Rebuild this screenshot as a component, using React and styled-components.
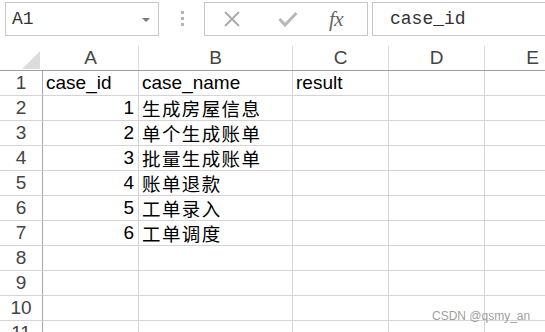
import React from "react";
import styled, { createGlobalStyle } from "styled-components";

const Global = createGlobalStyle`
  html, body { margin: 0; padding: 0; background: #fff; overflow: hidden; }
  body { width: 545px; height: 332px; font-family: "Liberation Sans", "Noto Sans CJK SC", sans-serif; }
`;

const Page = styled.div`
  position: relative;
  width: 545px;
  height: 332px;
  overflow: hidden;
`;

const Toolbar = styled.div`
  display: flex;
  align-items: flex-start;
  height: 40px;
  padding: 2px 0 0 5px;
  box-sizing: border-box;
`;

const NameBox = styled.div`
  box-sizing: border-box;
  width: 154px;
  height: 34px;
  border: 1px solid #c8c8c8;
  display: flex;
  align-items: center;
  justify-content: space-between;
  padding: 0 8px 0 6px;
  font-family: "Liberation Mono", monospace;
  font-size: 18px;
  color: #333;
`;

const Caret = styled.span`
  width: 0;
  height: 0;
  border-left: 4px solid transparent;
  border-right: 4px solid transparent;
  border-top: 4px solid #7a7a7a;
  margin-top: 1px;
`;

const Dots = styled.div`
  display: flex;
  flex-direction: column;
  gap: 3px;
  margin: 9px 0 0 22px;
`;

const Dot = styled.span`
  width: 3px;
  height: 3px;
  background: #b5b5b5;
`;

const FxGroup = styled.div`
  box-sizing: border-box;
  width: 164px;
  height: 34px;
  margin-left: 20px;
  border: 1px solid #c8c8c8;
  display: flex;
  align-items: center;
  padding-left: 18px;
`;

const IconSlot = styled.div`
  width: ${(p) => p.w}px;
  display: flex;
  align-items: center;
  justify-content: flex-start;
`;

const Fx = styled.span`
  font-family: "Liberation Serif", serif;
  font-style: italic;
  font-size: 21px;
  color: #666;
  line-height: 1;
  letter-spacing: -0.5px;
`;

const FormulaInput = styled.div`
  box-sizing: border-box;
  flex: 1;
  height: 34px;
  margin-left: 4px;
  margin-right: -4px;
  border: 1px solid #c8c8c8;
  display: flex;
  align-items: center;
  padding-left: 17px;
  font-family: "Liberation Mono", monospace;
  font-size: 18px;
  color: #333;
`;

const Sheet = styled.div`
  display: flex;
  flex-direction: column;
`;

const HeaderRow = styled.div`
  display: flex;
  align-items: flex-end;
  height: 31px;
  box-sizing: border-box;
  border-bottom: 1px solid #9e9e9e;
`;

const ColHead = styled.div`
  flex: none;
  box-sizing: border-box;
  width: ${(p) => p.w}px;
  height: 24px;
  border-right: 1px solid ${(p) => (p.corner ? "transparent" : "#dcdcdc")};
  display: flex;
  align-items: center;
  justify-content: center;
  font-size: 19px;
  color: #444;
`;

const CornerCell = styled(ColHead)`
  align-items: flex-end;
  justify-content: flex-end;
  padding: 0 2px 1px 0;
`;

const Triangle = styled.div`
  width: 18px;
  height: 18px;
  background: #dcdcdc;
  clip-path: polygon(100% 0, 100% 100%, 0 100%);
`;

const Row = styled.div`
  display: flex;
  height: 25px;
`;

const Cell = styled.div`
  flex: none;
  box-sizing: border-box;
  width: ${(p) => p.w}px;
  height: 25px;
  border-right: 1px solid #d4d4d4;
  border-bottom: 1px solid #d4d4d4;
  display: flex;
  align-items: center;
  justify-content: ${(p) => (p.num ? "flex-end" : "flex-start")};
  padding: 0 4px 0 3px;
  font-size: ${(p) => (p.cjk ? 18.5 : 19)}px;
  letter-spacing: ${(p) => (p.cjk ? "1.4px" : "0")};
  color: #000;
  white-space: nowrap;
  overflow: visible;
`;

const RowHead = styled(Cell)`
  justify-content: center;
  padding: 0;
  border-right-color: #a9a9a9;
  color: #444;
`;

const Watermark = styled.div`
  position: absolute;
  left: 432px;
  top: 309px;
  font-family: "Liberation Sans", sans-serif;
  font-size: 12px;
  color: rgba(140, 140, 140, 0.85);
  white-space: nowrap;
`;

const widths = [43, 96, 154, 96, 96, 96];
const letters = ["A", "B", "C", "D", "E"];

const data = [
  ["case_id", "case_name", "result"],
  [1, "生成房屋信息"],
  [2, "单个生成账单"],
  [3, "批量生成账单"],
  [4, "账单退款"],
  [5, "工单录入"],
  [6, "工单调度"],
];

const CrossIcon = () => (
  <svg width="18" height="16" viewBox="0 0 18 16">
    <path d="M2 1 L16 15 M16 1 L2 15" stroke="#a8a8a8" strokeWidth="1.8" fill="none" />
  </svg>
);

const CheckIcon = () => (
  <svg width="20" height="16" viewBox="0 0 20 16">
    <path d="M1.5 8 L7 14 L18.5 2" stroke="#b8b8b8" strokeWidth="3" fill="none" strokeLinejoin="miter" />
  </svg>
);

export default function App() {
  return (
    <Page>
      <Global />
      <Toolbar>
        <NameBox>
          <span>A1</span>
          <Caret />
        </NameBox>
        <Dots>
          <Dot />
          <Dot />
          <Dot />
        </Dots>
        <FxGroup>
          <IconSlot w={55}>
            <CrossIcon />
          </IconSlot>
          <IconSlot w={51}>
            <CheckIcon />
          </IconSlot>
          <IconSlot w={30}>
            <Fx>fx</Fx>
          </IconSlot>
        </FxGroup>
        <FormulaInput>case_id</FormulaInput>
      </Toolbar>
      <Sheet>
        <HeaderRow>
          <CornerCell w={widths[0]} corner>
            <Triangle />
          </CornerCell>
          {letters.map((l, i) => (
            <ColHead key={l} w={widths[i + 1]}>
              {l}
            </ColHead>
          ))}
        </HeaderRow>
        {Array.from({ length: 11 }, (_, r) => {
          const rowData = data[r] || [];
          return (
            <Row key={r}>
              <RowHead w={widths[0]}>{r + 1}</RowHead>
              {letters.map((l, c) => {
                const v = rowData[c];
                const num = typeof v === "number";
                const cjk = typeof v === "string" && /[\u4e00-\u9fff]/.test(v);
                return (
                  <Cell key={l} w={widths[c + 1]} num={num} cjk={cjk}>
                    {v}
                  </Cell>
                );
              })}
            </Row>
          );
        })}
      </Sheet>
      <Watermark>CSDN @qsmy_an</Watermark>
    </Page>
  );
}
